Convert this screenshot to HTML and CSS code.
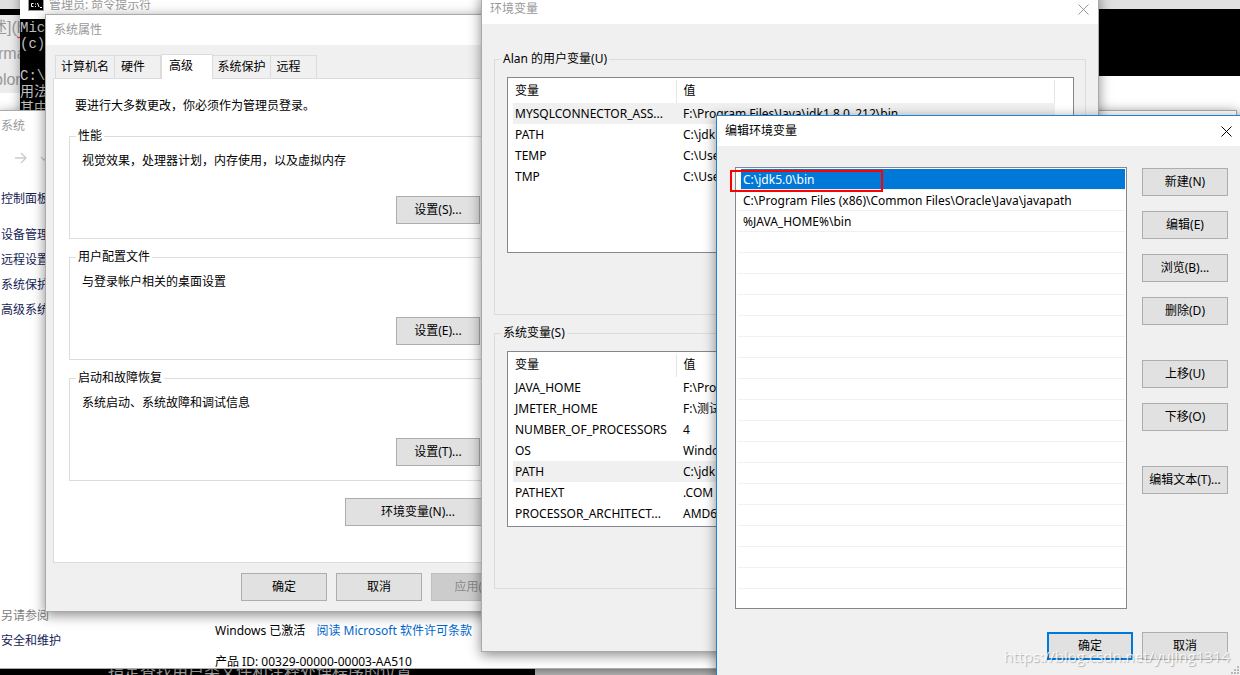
FILE: index.html
```
<!DOCTYPE html>
<html lang="zh-CN">
<head>
<meta charset="utf-8">
<title>编辑环境变量</title>
<link rel="stylesheet" href="styles.css">
</head>
<body>
<main class="desktop">
  <section class="editor" aria-label="Markdown">
    <div class="editor-lines"><p class="editor-link">述](<span class="typo">h</span></p><p>rma</p><p class="editor-color">olor</p></div>
  </section>

  <section class="console">
    <header class="console-title">
      <svg class="console-icon" viewBox="0 0 16 12" aria-hidden="true"><rect width="16" height="12" fill="#999"/><rect x="1" y="1" width="14" height="10" fill="#000"/><path d="M5.500 4.500h-2v3h2M7.500 4.500v1M7.500 7v1M9.500 4l1.500 4M12 8.500h2" fill="none" stroke="#fff"/></svg>
      <span>管理员: 命令提示符</span>
    </header>
    <pre class="console-text">Micr
(c)

C:\U
用法
其中</pre>
  </section>

  <section class="console-tail"><p>指定查找用户类文件和注释处理程序的位置</p></section>

  <section class="window system">
    <header class="titlebar system-title">系统</header>
    <div class="system-body">
      <nav class="system-nav">
        <svg class="nav-arrows" viewBox="0 0 36 16" aria-hidden="true"><path d="M1 8h11M7 3l5 5-5 5M27 7l3 3 3-3" fill="none" stroke="#ccc" stroke-width="1.400"/></svg>
        <a class="nav-home" href="#">控制面板</a>
        <a href="#">设备管理</a>
        <a href="#">远程设置</a>
        <a href="#">系统保护</a>
        <a href="#">高级系统</a>
        <div class="nav-more"><p>另请参阅</p><a href="#">安全和维护</a></div>
      </nav>
      <div class="activation">
        <p>Windows 已激活 <a href="#">阅读 Microsoft 软件许可条款</a></p>
        <p>产品 ID: 00329-00000-00003-AA510</p>
      </div>
    </div>
  </section>

  <section class="window properties">
    <header class="titlebar">系统属性</header>
    <div class="tabs" role="tablist">
      <button class="tab" role="tab">计算机名</button><button class="tab tab-hw" role="tab">硬件</button><button class="tab tab-active" role="tab" aria-selected="true">高级</button><button class="tab tab-protect" role="tab">系统保护</button><button class="tab tab-remote" role="tab">远程</button>
    </div>
    <div class="tab-panel">
      <p class="notice">要进行大多数更改，你必须作为管理员登录。</p>
      <fieldset class="group option"><legend>性能</legend><p>视觉效果，处理器计划，内存使用，以及虚拟内存</p><button class="button">设置(S)...</button></fieldset>
      <fieldset class="group option"><legend>用户配置文件</legend><p>与登录帐户相关的桌面设置</p><button class="button">设置(E)...</button></fieldset>
      <fieldset class="group option"><legend>启动和故障恢复</legend><p>系统启动、系统故障和调试信息</p><button class="button">设置(T)...</button></fieldset>
      <button class="button env-button">环境变量(N)...</button>
    </div>
    <footer class="actions"><button class="button">确定</button><button class="button">取消</button><button class="button" disabled>应用(A)</button></footer>
  </section>

  <section class="window environment">
    <header class="titlebar"><span>环境变量</span><button class="close" aria-label="关闭"><svg viewBox="0 0 11 11" aria-hidden="true"><path d="M.5.5l10 10M10.500.500l-10 10"/></svg></button></header>
    <fieldset class="group variables user-variables">
      <legend>Alan 的用户变量(U)</legend>
      <div class="list">
        <table>
          <thead><tr><th>变量</th><th>值</th></tr></thead>
          <tbody>
            <tr class="current"><td>MYSQLCONNECTOR_ASS...</td><td>F:\Program Files\Java\jdk1.8.0_212\bin</td></tr>
            <tr><td>PATH</td><td>C:\jdk</td></tr>
            <tr><td>TEMP</td><td>C:\Use</td></tr>
            <tr><td>TMP</td><td>C:\Use</td></tr>
          </tbody>
        </table>
      </div>
    </fieldset>
    <fieldset class="group variables system-variables">
      <legend>系统变量(S)</legend>
      <div class="list">
        <table>
          <thead><tr><th>变量</th><th>值</th></tr></thead>
          <tbody>
            <tr><td>JAVA_HOME</td><td>F:\Pro</td></tr>
            <tr><td>JMETER_HOME</td><td>F:\测试</td></tr>
            <tr><td>NUMBER_OF_PROCESSORS</td><td>4</td></tr>
            <tr><td>OS</td><td>Windo</td></tr>
            <tr class="current"><td>PATH</td><td>C:\jdk</td></tr>
            <tr><td>PATHEXT</td><td>.COM</td></tr>
            <tr><td>PROCESSOR_ARCHITECT...</td><td>AMD6</td></tr>
          </tbody>
        </table>
      </div>
    </fieldset>
  </section>

  <section class="window dialog">
    <header class="titlebar"><span>编辑环境变量</span><button class="close" aria-label="关闭"><svg viewBox="0 0 11 11" aria-hidden="true"><path d="M.5.5l10 10M10.500.500l-10 10"/></svg></button></header>
    <div class="dialog-body">
      <ul class="paths">
        <li class="selected">C:\jdk5.0\bin</li>
        <li>C:\Program Files (x86)\Common Files\Oracle\Java\javapath</li>
        <li>%JAVA_HOME%\bin</li>
        <li></li><li></li><li></li><li></li><li></li><li></li><li></li><li></li><li></li><li></li><li></li><li></li><li></li><li></li><li></li><li></li><li></li>
      </ul>
      <div class="side">
        <div class="side-group"><button class="button">新建(N)</button><button class="button">编辑(E)</button><button class="button">浏览(B)...</button><button class="button">删除(D)</button></div>
        <div class="side-group"><button class="button">上移(U)</button><button class="button">下移(O)</button></div>
        <div class="side-group"><button class="button">编辑文本(T)...</button></div>
      </div>
    </div>
    <footer class="dialog-actions"><button class="button default">确定</button><button class="button">取消</button></footer>
    <div class="marker"></div>
    <p class="watermark">https://blog.csdn.net/yujing1314</p>
    <svg class="grip" viewBox="0 0 9 9" aria-hidden="true"><path d="M6 0h2v2h-2zM3 3h2v2h-2zM6 3h2v2h-2zM0 6h2v2h-2zM3 6h2v2h-2zM6 6h2v2h-2z" fill="#b8b8b8"/></svg>
  </section>
</main>
</body>
</html>
```
FILE: styles.css
```
* { box-sizing: border-box; }
body, p, ul, pre { margin: 0; padding: 0; }
body { font: 12px/16px "Noto Sans", "Noto Sans CJK SC", sans-serif; color: #000; }
a { color: #151c55; text-decoration: none; }
button { font: inherit; color: inherit; padding: 0; }
.desktop { position: relative; height: 100vh; overflow: hidden; background: #fff; white-space: nowrap; }

.editor { position: absolute; inset: 0 0 auto; height: 76px; border-top: 9px solid #e0e0e0; background: #000; }
.editor-lines { width: 60px; height: 78px; margin-top: 6px; background: #ececec; color: #999; font: 16px/26px "Liberation Sans", "Noto Sans CJK SC", sans-serif; }
.editor-lines p { margin-left: -2px; }
.editor-lines .editor-link { margin-left: -9px; }
.editor-lines .editor-color { margin-left: -6px; }
.typo { text-decoration: underline wavy #f00 1px; }

.console { position: absolute; left: 20px; top: -10px; width: 600px; height: 130px; background: #000; box-shadow: 0 0 10px #0006; }
.console-title { display: flex; gap: 5px; align-items: center; height: 29px; padding: 0 8px; background: #fff; color: #999; }
.console-icon { width: 16px; height: 12px; }
.console-text { padding-top: 1px; color: #c0c0c0; font: 14px/16px "Liberation Mono", "Noto Sans CJK SC", monospace; }
.console-tail { position: absolute; left: 0; right: 0; bottom: 0; height: 20px; background: linear-gradient(90deg, #000 535px, #c8c8c8 535px); color: #c0c0c0; }
.console-tail p { padding-left: 108px; font-size: 16px; line-height: 32px; }

.window { position: absolute; background: #f0f0f0; border: 1px solid #aaa; box-shadow: 0 3px 12px #0007; }
.titlebar { display: flex; justify-content: space-between; align-items: center; height: 30px; padding: 0 8px; background: #fff; color: #999; }
.close { display: flex; padding: 0; border: 0; background: none; }
.close svg { width: 11px; height: 11px; fill: none; stroke: currentColor; }
.button { height: 28px; min-width: 86px; border: 1px solid #adadad; background: #e1e1e1; }
.button:disabled { background: #ccc; border-color: #bfbfbf; color: #888; }
.group { margin: 0; padding: 0; border: 1px solid #dcdcdc; min-width: 0; }
.group legend { margin-left: 6px; padding: 0 2px; height: 16px; }

.system { left: -1px; top: 110px; right: 3px; bottom: 6px; background: #fff; }
.system-title { padding: 0 1px; }
.system-body { display: flex; height: 529px; }
.system-nav { display: flex; flex-direction: column; gap: 9px; width: 215px; padding-left: 1px; }
.nav-arrows { width: 36px; height: 16px; margin: 9px 0 16px 13px; }
.nav-home { margin-bottom: 11px; }
.nav-more { margin-top: auto; padding-bottom: 21px; color: #808080; }
.nav-more p { margin-bottom: 9px; }
.activation { display: flex; flex-direction: column; justify-content: flex-end; gap: 15px; }
.activation a { margin-left: 8px; color: #0066cc; }

.properties { left: 45px; top: 14px; width: 480px; height: 598px; }
.tabs { display: flex; align-items: flex-end; padding: 9px 9px 0; }
.tab { width: 60px; height: 23px; border: 1px solid #dcdcdc; border-bottom: 0; background: #f0f0f0; }
.tab-hw { width: 46px; padding-right: 9px; border-left: 0; }
.tab-active { width: 52px; height: 25px; padding: 0 12px 3px 0; background: #fff; margin-bottom: -1px; }
.tab-protect { width: 58px; border-left: 0; }
.tab-remote { width: 46px; padding-right: 10px; border-left: 0; }
.tab-panel { display: flex; flex-direction: column; height: 485px; margin: 0 7px; padding: 19px 15px; border: 1px solid #dcdcdc; background: #fff; }
.notice { padding-left: 6px; margin-bottom: 14px; }
.option { display: flex; flex-direction: column; height: 111px; margin-bottom: 10px; }
.option p { margin: 9px 12px 27px; }
.option .button { width: 84px; min-width: 0; margin-left: 326px; }
.env-button { width: 146px; margin: 7px 0 0 276px; flex-shrink: 0; }
.actions { display: flex; gap: 9px; padding: 10px 0 0 195px; }

.environment { left: 481px; top: -7px; width: 618px; height: 659px; }
.environment .titlebar { padding-right: 9px; }
.variables { margin: 0 12px; padding: 10px 11px 0 12px; }
.variables legend { margin-left: -6px; }
.user-variables { height: 264px; margin-top: 27px; margin-bottom: 10px; }
.system-variables { height: 264px; }
.list { height: 176px; padding: 2px 18px 2px 5px; border: 1px solid #828790; background: #fff; }
.list table { width: 100%; border-collapse: collapse; table-layout: fixed; }
.list th, .list td { height: 21px; padding: 0 2px; text-align: left; font-weight: 400; overflow: hidden; }
.list th { height: 23px; padding-bottom: 2px; border-right: 1px solid #e5e5e5; }
.list th:first-child { width: 163px; }
.list th + th, .list td + td { padding-left: 7px; }
.current { background: #f0f0f0; }

.dialog { left: 716px; top: 115px; right: -2px; bottom: -6px; border-color: #1883d7; }
.dialog .titlebar { color: #000; padding-right: 9px; }
.dialog-body { display: flex; gap: 15px; padding: 21px 13px 0 18px; }
.paths { flex: 1; height: 442px; padding: 1px 1px 0 2px; border: 1px solid #828790; background: #fff; list-style: none; }
.paths li { height: 21px; padding: 3px 5px 1px; border-bottom: 1px solid #f0f0f0; }
.paths .selected { margin-left: 3px; padding-left: 2px; background: #0078d7; color: #fff; }
.side { display: flex; flex-direction: column; gap: 35px; width: 86px; padding-top: 1px; }
.side-group { display: flex; flex-direction: column; gap: 15px; }
.dialog-actions { display: flex; justify-content: flex-end; gap: 9px; padding: 23px 13px 0; }
.default { border: 2px solid #0078d7; }
.marker { position: absolute; left: 13px; top: 54px; width: 153px; height: 22px; border: 2px solid #f00; }
.watermark { position: absolute; right: 11px; bottom: 14px; color: #fffc; font: 15px/20px "Open Sans", sans-serif; text-shadow: 1px 1px 1px #0004; }
.grip { position: absolute; right: 1px; bottom: 5px; width: 9px; height: 9px; }
```
